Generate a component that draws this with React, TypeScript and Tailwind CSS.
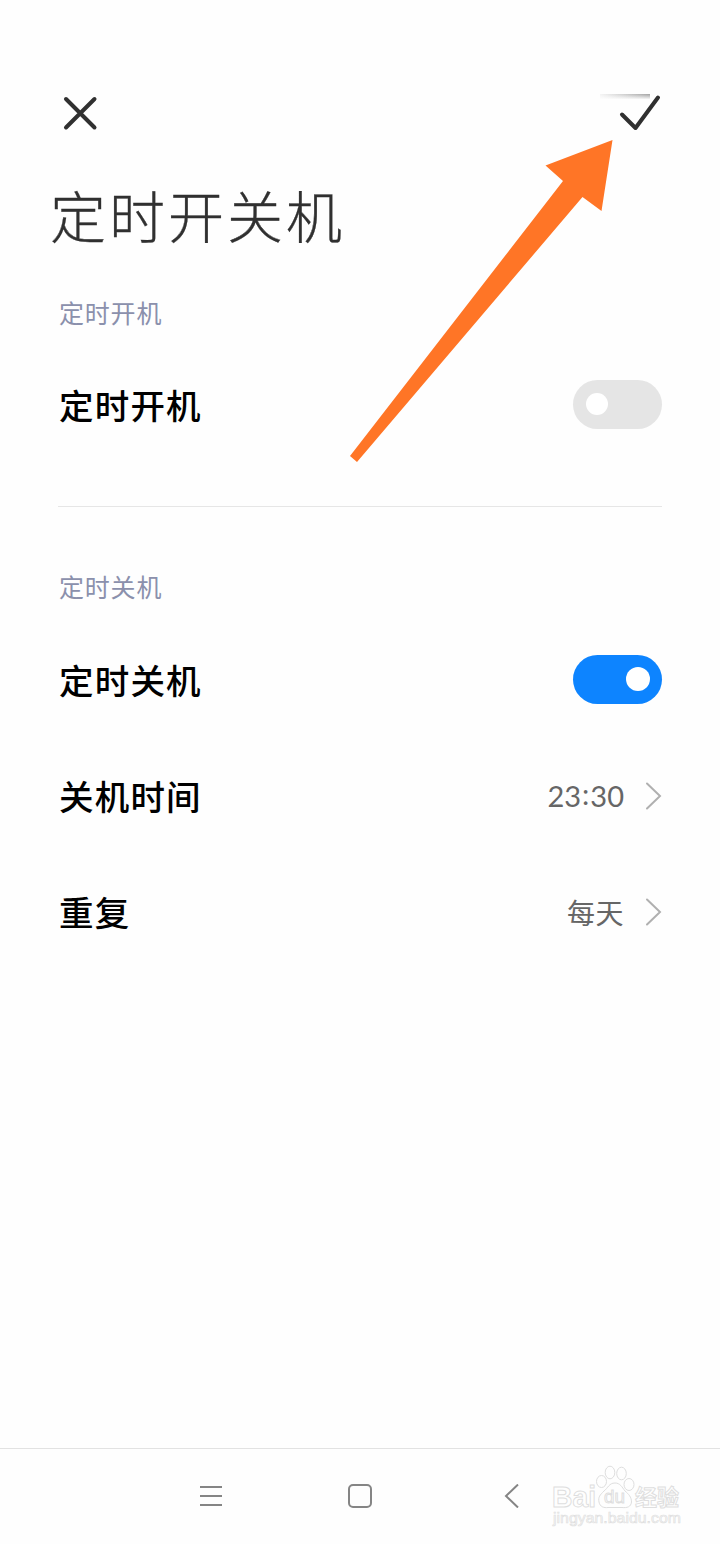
import type { ReactNode } from "react";

function Toggle({ on }: { on: boolean }) {
    return on ? (
        <div className="flex h-[49px] w-[89px] items-center justify-end rounded-full bg-[#0d84ff] pr-3">
            <div className="size-6 rounded-full bg-white" />
        </div>
    ) : (
        <div className="flex h-[49px] w-[89px] items-center rounded-full bg-[#e5e5e5] pl-[13px]">
            <div className="size-[22px] rounded-full bg-white" />
        </div>
    );
}

function Row({ label, children }: { label: string; children: ReactNode }) {
    return (
        <div className="flex h-[116px] items-center justify-between">
            <span className="ml-px text-[34.5px] leading-none font-medium tracking-[1.2px] text-black">{label}</span>
            {children}
        </div>
    );
}

function Value({ children }: { children: ReactNode }) {
    return (
        <div className="flex items-center gap-[21px] pt-px text-[#666]">
            {children}
            <svg className="h-7 w-[17px]" viewBox="0 0 17 28" fill="none" stroke="#b0b0b0" strokeWidth="2" strokeLinecap="round">
                <path d="M2 1.5L15 14L2 26.5" />
            </svg>
        </div>
    );
}

function SectionTitle({ text }: { text: string }) {
    return <h2 className="-mt-px mb-px ml-px text-[25px] leading-9 tracking-[0.8px] text-[#8b90ac]">{text}</h2>;
}

function Arrow() {
    return (
        <svg className="pointer-events-none absolute top-0 left-0 h-[480px] w-[720px]" viewBox="0 0 720 480">
            <polygon points="612.5,140 545.5,165.5 563,181 350,456 357,462 582.5,197 601.5,211" fill="#ff7526" />
        </svg>
    );
}

function Watermark() {
    return (
        <svg className="absolute right-[36px] bottom-[14px] h-[68px] w-[134px]" viewBox="550 1462 134 68" fill="#fefefe" stroke="#dedede" strokeWidth="1" fontFamily="'Liberation Sans', 'Noto Sans CJK SC', sans-serif">
            <text x="552" y="1507" fontSize="29" fontWeight="bold" textLength="44" lengthAdjust="spacingAndGlyphs">Bai</text>
            <ellipse cx="601.5" cy="1481.5" rx="5" ry="6" />
            <ellipse cx="610" cy="1472.500" rx="4.8" ry="6.3" />
            <ellipse cx="621.5" cy="1473.500" rx="4.8" ry="6.3" />
            <ellipse cx="629" cy="1484.500" rx="5" ry="6" />
            <path d="M615 1483c-6 0-7 5-11 8c-4 4-6 6-5 11c1 5 5 6 9 5.500h14c5 .5 9-.5 9.500-5.500c0-5-3-8-6.500-11c-3-4-5-8-10-8z" />
            <text x="604" y="1503" fontSize="19" textLength="21" lengthAdjust="spacingAndGlyphs">du</text>
            <text x="635" y="1505" fontSize="22" fontWeight="bold" fontFamily="'Noto Sans CJK SC', sans-serif">经验</text>
            <text x="553" y="1523" fontSize="15" fill="#f8f8f8" strokeWidth="0.6" textLength="128" lengthAdjust="spacingAndGlyphs">jingyan.baidu.com</text>
        </svg>
    );
}

export default function App() {
    return (
        <main className="relative flex h-[1544px] w-[720px] flex-col bg-[#fefefe] font-['Noto_Sans_CJK_SC',sans-serif]">
            <header className="flex h-[175px] items-start justify-between pt-[93px] pr-[58px] pl-[62px]">
                <svg className="h-10 w-9" viewBox="0 0 36 40" fill="none" stroke="#303030" strokeWidth="4" strokeLinecap="round">
                    <path d="M4 6L32.500 34.500M32.500 6L4 34.500" />
                </svg>
                <svg className="h-10 w-[62px]" viewBox="0 0 62 40" fill="none">
                    <defs>
                        <linearGradient id="shade" x1="0" x2="1" y1="0" y2="0">
                            <stop offset="0" stopColor="#999" stopOpacity="0.1" />
                            <stop offset="1" stopColor="#888" stopOpacity="0.8" />
                        </linearGradient>
                        <linearGradient id="fade" x1="0" x2="0" y1="0" y2="1">
                            <stop offset="0" stopColor="#fefefe" stopOpacity="0" />
                            <stop offset="1" stopColor="#fefefe" />
                        </linearGradient>
                    </defs>
                    <path d="M0 1H50V6H0Z" fill="url(#shade)" />
                    <path d="M0 1H51V6.500H0Z" fill="url(#fade)" />
                    <path d="M22 21.500L35.500 35L58 4.500" stroke="#303030" strokeWidth="4" strokeLinecap="round" strokeLinejoin="round" />
                </svg>
            </header>

            <h1 className="h-[120px] pl-[50px] text-[56px] leading-[78px] font-light tracking-[3px] text-[#303030] [-webkit-text-stroke:0.3px_#303030]">定时开关机</h1>

            <section className="mx-[58px] flex h-[212px] flex-col border-b border-[#e6e6e6]">
                <SectionTitle text="定时开机" />
                <div className="mt-[15px]">
                    <Row label="定时开机">
                        <Toggle on={false} />
                    </Row>
                </div>
            </section>

            <section className="mx-[58px] flex flex-1 flex-col pt-[62px]">
                <SectionTitle text="定时关机" />
                <div className="mt-4">
                    <Row label="定时关机">
                        <Toggle on />
                    </Row>
                    <Row label="关机时间">
                        <Value>
                            <span className="font-['Lato',sans-serif] text-[29px] leading-none">
                                23<span className="relative -top-[2px] px-px">:</span>30
                            </span>
                        </Value>
                    </Row>
                    <Row label="重复">
                        <Value>
                            <span className="text-[28px] leading-none tracking-[0.5px]">每天</span>
                        </Value>
                    </Row>
                </div>
            </section>

            <nav className="flex h-24 items-center justify-center gap-[125.5px] border-t border-[#e2e2e2] pb-0.5">
                <svg className="size-6" viewBox="0 0 24 24" fill="none" stroke="#858585" strokeWidth="2">
                    <path d="M1 3H23M1 12H23M1 21H23" />
                </svg>
                <svg className="size-6" viewBox="0 0 24 24" fill="none" stroke="#858585" strokeWidth="2">
                    <rect x="1" y="1" width="22" height="22" rx="4" />
                </svg>
                <svg className="size-6" viewBox="0 0 24 24" fill="none" stroke="#858585" strokeWidth="2">
                    <path d="M20 0.500L8 12L20 23.500" />
                </svg>
            </nav>

            <Arrow />
            <Watermark />
        </main>
    );
}
